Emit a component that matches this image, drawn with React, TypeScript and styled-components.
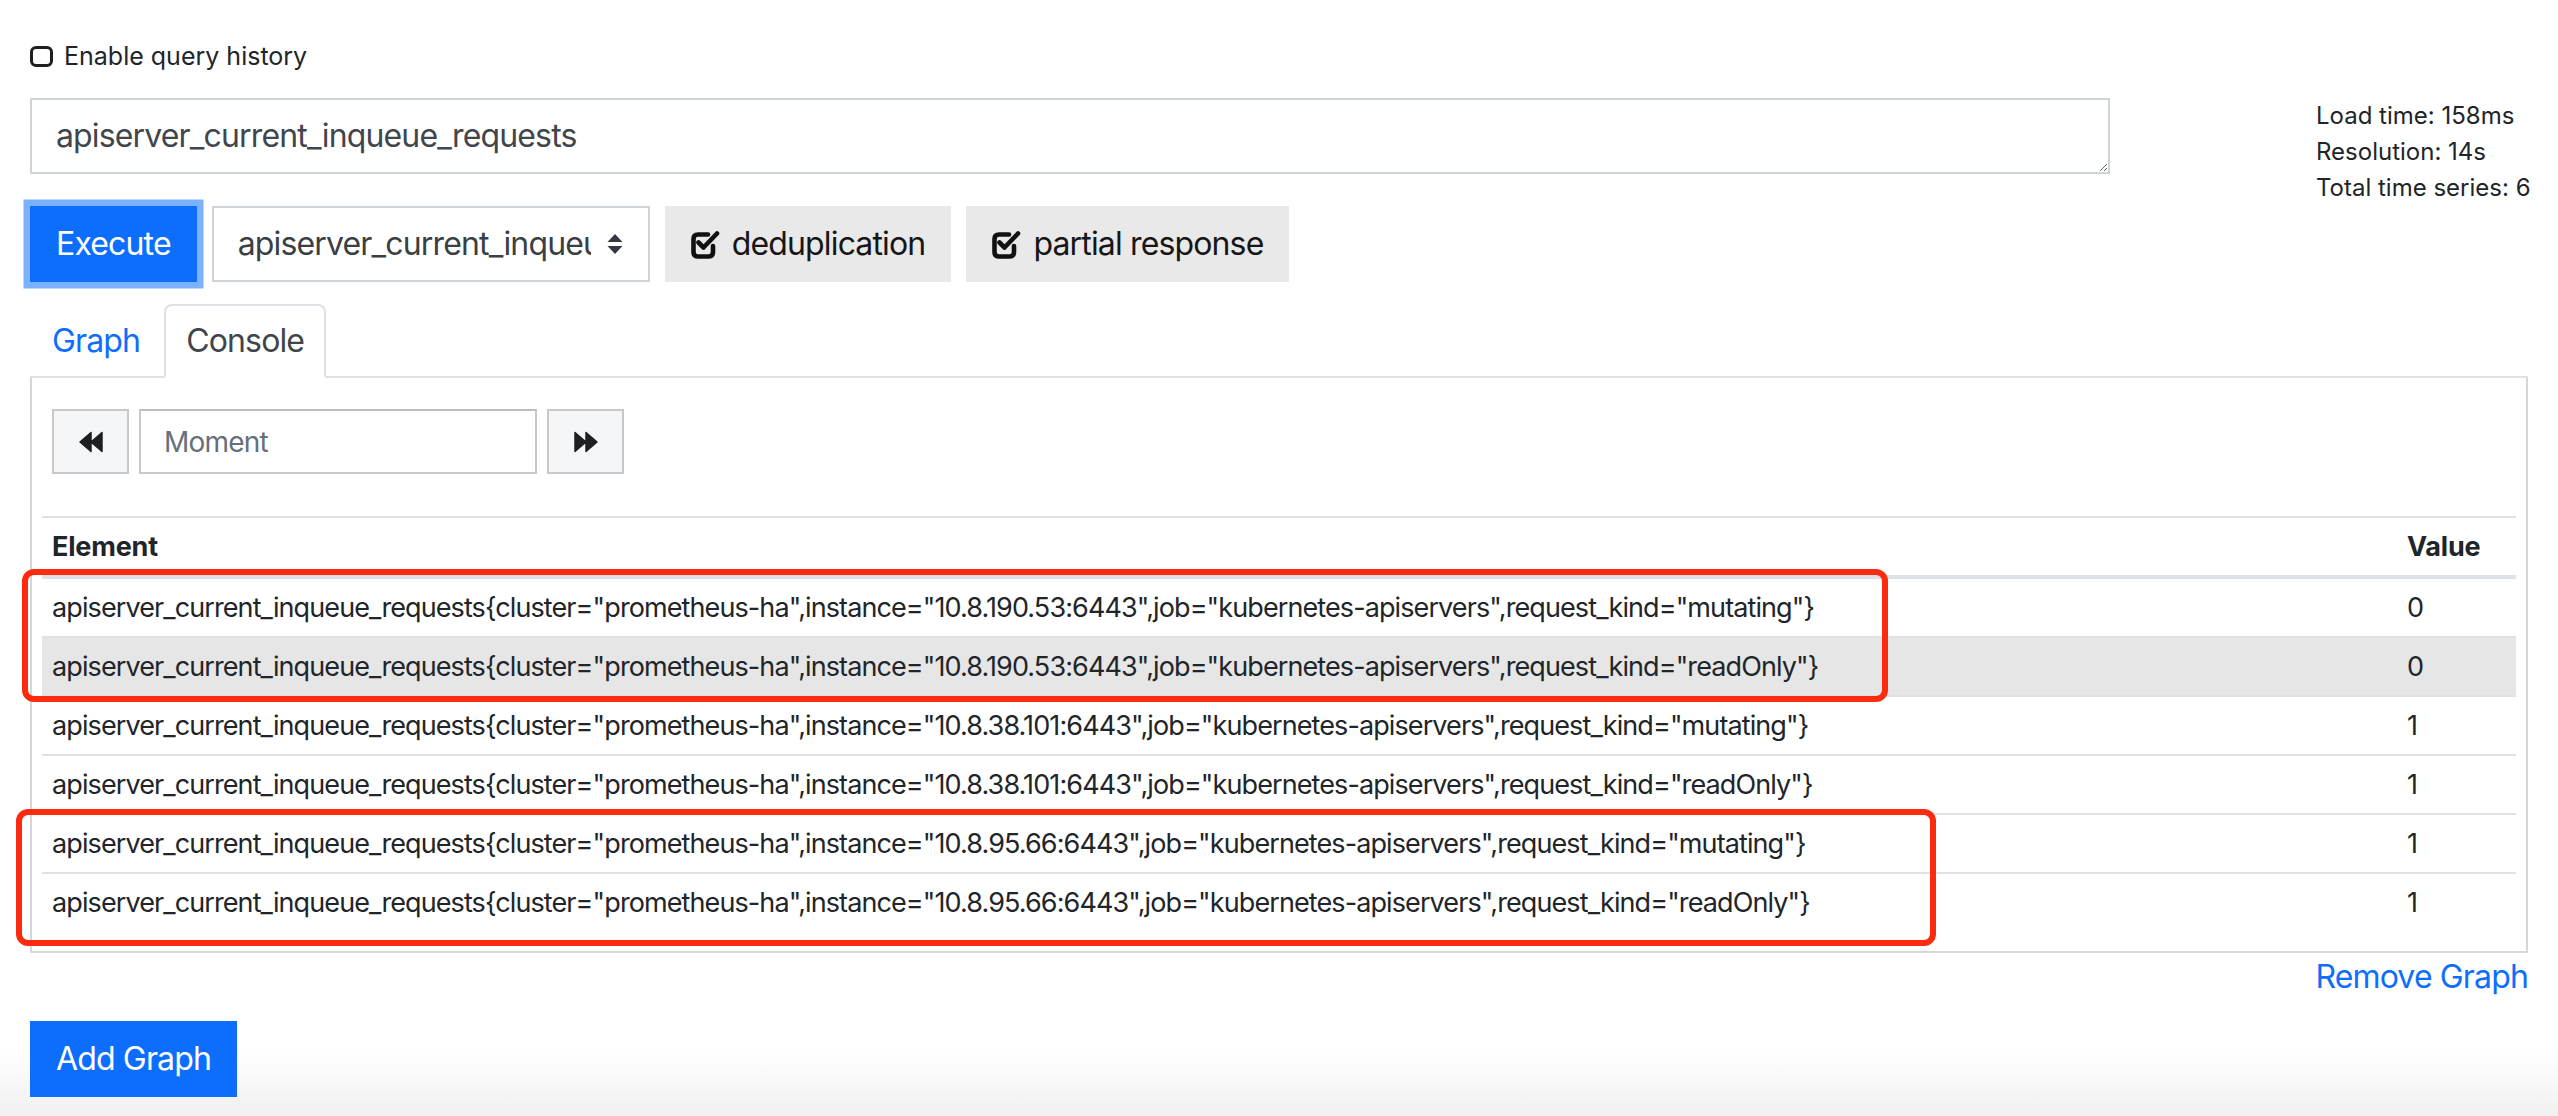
import React from "react";
import styled, { createGlobalStyle } from "styled-components";

const GlobalStyle = createGlobalStyle`
  html, body { margin: 0; padding: 0; background: #fff; }
  body { font-family: Inter, "Liberation Sans", sans-serif; color: #212529; }
  *, *::before, *::after { box-sizing: border-box; }
`;

const Page = styled.div`
  position: relative;
  min-height: 1116px;
  padding: 38px 30px 20px 30px;
  background: linear-gradient(to bottom, #fff 0, #fff 1050px, #f0f0f0 1116px);
`;

const CheckRow = styled.label`
  display: flex;
  align-items: center;
  gap: 11px;
  font-size: 25px;
  line-height: 36px;
  color: #212529;
`;

const CheckBox = styled.span`
  display: inline-block;
  width: 23px;
  height: 21px;
  border: 3.5px solid #1d1f21;
  border-radius: 6px;
  background: #fff;
`;

const QueryRow = styled.div`
  display: flex;
  justify-content: space-between;
  align-items: flex-start;
  margin-top: 24px;
`;

const LeftCol = styled.div`
  width: 2080px;
  display: flex;
  flex-direction: column;
`;

const QueryInput = styled.textarea`
  display: block;
  width: 100%;
  height: 76px;
  margin: 0;
  padding: 12px 24px;
  border: 2px solid #ced4da;
  border-radius: 0;
  font-family: Inter, "Liberation Sans", sans-serif;
  font-size: 32px;
  line-height: 48px;
  letter-spacing: -0.85px;
  color: #41464c;
  background: #fff;
  outline: none;
  resize: vertical;
`;

const ButtonRow = styled.div`
  display: flex;
  align-items: center;
  gap: 15px;
  margin-top: 32px;
`;

const PrimaryButton = styled.button<{ $ring?: boolean }>`
  height: 76px;
  padding: 0 24px;
  border: 2px solid #0d6efd;
  border-radius: 0;
  background: #0d6efd;
  color: #fff;
  font-family: Inter, "Liberation Sans", sans-serif;
  font-size: 32px;
  line-height: 48px;
  letter-spacing: -0.85px;
  box-shadow: ${(p) => (p.$ring ? "0 0 0 6.5px #7cb2fd" : "none")};
  cursor: pointer;
`;

const SelectBox = styled.div`
  width: 438px;
  height: 76px;
  display: flex;
  align-items: center;
  padding: 0 24px 0 24px;
  border: 2px solid #ced4da;
  background: #fff;
  color: #3a3f45;
  font-size: 32px;
  line-height: 48px;
  letter-spacing: -0.85px;
`;

const SelectText = styled.span`
  flex: 1;
  min-width: 0;
  overflow: hidden;
  white-space: nowrap;
`;

const SelectArrows = styled.svg`
  flex: 0 0 auto;
  margin-left: 15px;
`;

const ToggleButton = styled.button`
  height: 76px;
  display: flex;
  align-items: center;
  gap: 12px;
  padding: 0 26px 0 25px;
  border: none;
  border-radius: 0;
  background: #e9e9e9;
  color: #161616;
  font-family: Inter, "Liberation Sans", sans-serif;
  font-size: 32px;
  line-height: 48px;
  letter-spacing: -0.85px;
`;

const Stats = styled.div`
  width: 212px;
  font-size: 24px;
  line-height: 36px;
  color: #212529;
  white-space: nowrap;
`;

const TabBar = styled.div`
  display: flex;
  align-items: flex-end;
  gap: 2px;
  margin-top: 22px;
  border-bottom: 2px solid #dee2e6;
`;

const Tab = styled.div<{ $active?: boolean }>`
  padding: 11px 20px;
  margin-bottom: -2px;
  border: 2px solid ${(p) => (p.$active ? "#dee2e6" : "transparent")};
  border-bottom: 2px solid ${(p) => (p.$active ? "#fff" : "transparent")};
  border-radius: 8px 8px 0 0;
  background: ${(p) => (p.$active ? "#fff" : "transparent")};
  color: ${(p) => (p.$active ? "#3f454b" : "#0d6efd")};
  font-size: 32px;
  line-height: 48px;
  letter-spacing: -0.85px;
`;

const Panel = styled.div`
  border: 2px solid #d6d6d6;
  border-top: none;
  padding: 10px 10px 10px 10px;
`;

const Controls = styled.div`
  display: flex;
  gap: 10px;
  margin: 21px 10px 0 10px;
`;

const StepButton = styled.button`
  width: 77px;
  height: 65px;
  display: flex;
  align-items: center;
  justify-content: center;
  padding: 0;
  border: 2px solid #c8c8c8;
  border-radius: 0;
  background: #f5f6f8;
`;

const MomentInput = styled.input`
  width: 398px;
  height: 65px;
  padding: 0 23px;
  border: 2px solid #c8c8c8;
  border-top-color: #bdbdbd;
  border-radius: 0;
  font-family: Inter, "Liberation Sans", sans-serif;
  font-size: 28px;
  letter-spacing: -0.8px;
  color: #495057;
  outline: none;
  &::placeholder { color: #66707a; }
`;

const Table = styled.table`
  width: 100%;
  margin-top: 42px;
  margin-bottom: 10px;
  border-collapse: collapse;
  font-size: 27px;
  line-height: 42px;
  letter-spacing: -0.9px;
  color: #212529;
`;

const Th = styled.th<{ $narrow?: boolean }>`
  padding: 7.5px 10px;
  border-top: 2px solid #dee2e6;
  border-bottom: 4px solid #dee2e6;
  text-align: left;
  font-weight: 700;
  letter-spacing: -0.2px;
  width: ${(p) => (p.$narrow ? "119px" : "auto")};
`;

const Tr = styled.tr<{ $hover?: boolean }>`
  background: ${(p) => (p.$hover ? "#e6e6e6" : "transparent")};
`;

const Td = styled.td`
  padding: 7.5px 10px;
  border-top: 2px solid #dee2e6;
  white-space: nowrap;
`;

const RemoveRow = styled.div`
  display: flex;
  justify-content: flex-end;
`;

const TextLink = styled.a`
  color: #0d6efd;
  font-size: 32px;
  line-height: 48px;
  letter-spacing: -0.85px;
  text-decoration: none;
`;

const AddRow = styled.div`
  margin-top: 20px;
`;

const Annotation = styled.div`
  position: absolute;
  border: 6px solid #fc2b10;
  border-radius: 12px;
  pointer-events: none;
`;

const CheckSquareIcon = () => (
  <svg width="30" height="29" viewBox="0 0 30 29" fill="none">
    <path
      d="M18 4.5 H8 Q3.5 4.5 3.5 9 V22 Q3.5 26.5 8 26.5 H18.5 Q23 26.5 23 22 V16"
      stroke="#111"
      strokeWidth="4.6"
      strokeLinecap="round"
      strokeLinejoin="round"
    />
    <path
      d="M8.5 12.5 L13.5 17.5 L27 3.5"
      stroke="#111"
      strokeWidth="4.6"
      strokeLinecap="round"
      strokeLinejoin="round"
    />
  </svg>
);

const BackwardIcon = () => (
  <svg width="24" height="22" viewBox="0 0 24 22">
    <path d="M1 11 L12 1.5 V20.5 Z M12 11 L23 1.5 V20.5 Z" fill="#1d1f21" strokeLinejoin="round" stroke="#1d1f21" strokeWidth="1.5" />
  </svg>
);

const ForwardIcon = () => (
  <svg width="24" height="22" viewBox="0 0 24 22">
    <path d="M23 11 L12 1.5 V20.5 Z M12 11 L1 1.5 V20.5 Z" fill="#1d1f21" strokeLinejoin="round" stroke="#1d1f21" strokeWidth="1.5" />
  </svg>
);

const rows = [
  { instance: "10.8.190.53:6443", kind: "mutating", value: "0" },
  { instance: "10.8.190.53:6443", kind: "readOnly", value: "0", hover: true },
  { instance: "10.8.38.101:6443", kind: "mutating", value: "1" },
  { instance: "10.8.38.101:6443", kind: "readOnly", value: "1" },
  { instance: "10.8.95.66:6443", kind: "mutating", value: "1" },
  { instance: "10.8.95.66:6443", kind: "readOnly", value: "1" },
];

export default function App() {
  return (
    <>
      <GlobalStyle />
      <Page>
        <CheckRow>
          <CheckBox />
          Enable query history
        </CheckRow>

        <QueryRow>
          <LeftCol>
            <QueryInput defaultValue="apiserver_current_inqueue_requests" spellCheck={false} />
            <ButtonRow>
              <PrimaryButton $ring>Execute</PrimaryButton>
              <SelectBox>
                <SelectText>apiserver_current_inqueue_requests</SelectText>
                <SelectArrows width="18" height="22" viewBox="0 0 18 22">
                  <path d="M9 1 L16.5 9 H1.5 Z" fill="#343a40" />
                  <path d="M1.5 13 H16.5 L9 21 Z" fill="#343a40" />
                </SelectArrows>
              </SelectBox>
              <ToggleButton>
                <CheckSquareIcon />
                deduplication
              </ToggleButton>
              <ToggleButton>
                <CheckSquareIcon />
                partial response
              </ToggleButton>
            </ButtonRow>
          </LeftCol>
          <Stats>
            <div>Load time: 158ms</div>
            <div>Resolution: 14s</div>
            <div>Total time series: 6</div>
          </Stats>
        </QueryRow>

        <TabBar>
          <Tab>Graph</Tab>
          <Tab $active>Console</Tab>
        </TabBar>
        <Panel>
          <Controls>
            <StepButton>
              <BackwardIcon />
            </StepButton>
            <MomentInput placeholder="Moment" />
            <StepButton>
              <ForwardIcon />
            </StepButton>
          </Controls>
          <Table>
            <thead>
              <tr>
                <Th>Element</Th>
                <Th $narrow>Value</Th>
              </tr>
            </thead>
            <tbody>
              {rows.map((r, i) => (
                <Tr key={i} $hover={r.hover}>
                  <Td>
                    {`apiserver_current_inqueue_requests{cluster="prometheus-ha",instance="${r.instance}",job="kubernetes-apiservers",request_kind="${r.kind}"}`}
                  </Td>
                  <Td>{r.value}</Td>
                </Tr>
              ))}
            </tbody>
          </Table>
        </Panel>
        <RemoveRow>
          <TextLink href="#">Remove Graph</TextLink>
        </RemoveRow>
        <AddRow>
          <PrimaryButton>Add Graph</PrimaryButton>
        </AddRow>

        <Annotation style={{ left: 22, top: 569, width: 1866, height: 133 }} />
        <Annotation style={{ left: 16, top: 809, width: 1920, height: 137 }} />
      </Page>
    </>
  );
}
